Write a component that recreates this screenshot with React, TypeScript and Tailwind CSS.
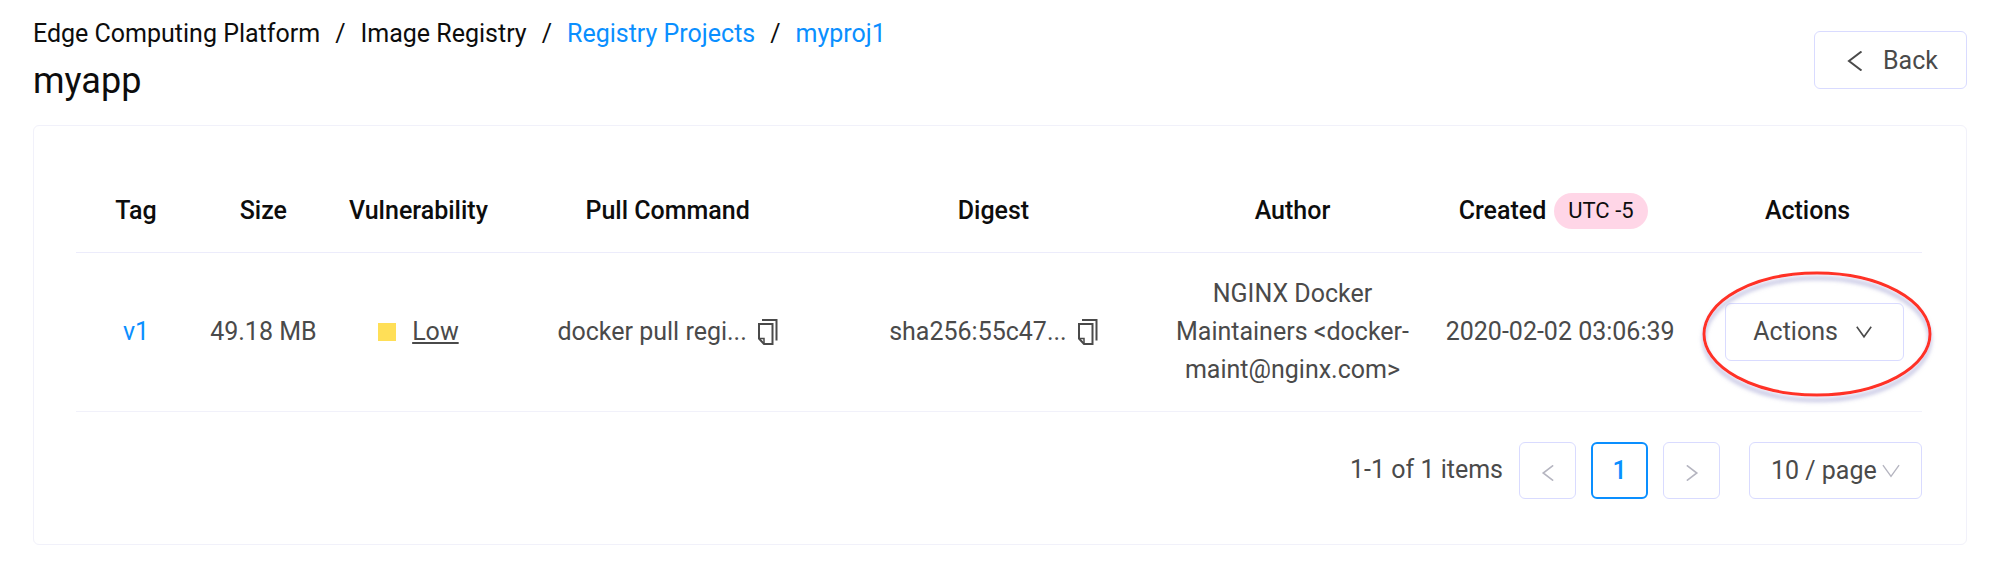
import React from "react";

type ChevronProps = { d: string; className: string; strokeWidth?: number };

function Chevron({ d, className, strokeWidth = 2 }: ChevronProps) {
  return (
    <svg viewBox="0 0 20 20" className={className} fill="none" stroke="currentColor" strokeWidth={strokeWidth} aria-hidden="true">
      <path d={d} />
    </svg>
  );
}

const LEFT = "M16.5 0.5L4 10L16.5 19.5";
const RIGHT = "M3.5 0.5L16 10L3.5 19.5";
const DOWN = "M1 3.5L10 16L19 3.5";

function CopyButton({ label }: { label: string }) {
  return (
    <button type="button" aria-label={label} className="shrink-0">
      <svg viewBox="0 0 20 28" className="h-7 w-5" fill="none" stroke="#4a4a4a" strokeWidth="2" aria-hidden="true">
        <path d="M4 2H18.5V22.5" />
        <path d="M1 6H14.5V26H6L1 20.5Z" />
        <path d="M1 20.5H6V26" strokeWidth="1.5" />
      </svg>
    </button>
  );
}

const columns = [
  { name: "Tag", width: "w-[6.5%]" },
  { name: "Size", width: "w-[7.3%]" },
  { name: "Vulnerability", width: "w-[9.5%]" },
  { name: "Pull Command", width: "w-[17.5%]" },
  { name: "Digest", width: "w-[17.8%]" },
  { name: "Author", width: "w-[14.6%]" },
  { name: "Created", width: "w-[14.4%]" },
  { name: "Actions", width: "w-[12.4%]" },
];

export default function App() {
  return (
    <main className="bg-white px-[33px] pt-[15px] pb-[34px] font-['Roboto',sans-serif] text-[25px] leading-[38px] text-[#4a4a4a]">
      <header className="flex items-start justify-between text-[#0d0d0d]">
        <div>
          <nav aria-label="Breadcrumb">
            <ol className="flex gap-[15px]">
              <li>Edge Computing Platform</li>
              <li aria-hidden="true">/</li>
              <li>Image Registry</li>
              <li aria-hidden="true">/</li>
              <li><a href="#projects" className="text-[#0a8fff]">Registry Projects</a></li>
              <li aria-hidden="true">/</li>
              <li><a href="#myproj1" className="text-[#0a8fff]">myproj1</a></li>
            </ol>
          </nav>
          <h1 className="text-[36px] leading-[56px]">myapp</h1>
        </div>
        <button type="button" className="mt-4 flex h-[58px] w-[153px] items-center justify-center gap-[18px] rounded-md border border-[#d9dbff] pt-px pl-0.5 text-[#4a4a4a]">
          <Chevron d={LEFT} className="size-5" />
          Back
        </button>
      </header>

      <section className="mt-4 rounded-md border border-[#f1f1fa] pt-[42px] pr-11 pb-[45px] pl-[42px]">
        <table className="w-full table-fixed border-separate border-spacing-0 text-center">
          <thead className="text-[#0d0d0d]">
            <tr>
              {columns.map((c) => (
                <th key={c.name} scope="col" className={`${c.width} border-b border-[#ececfb] pt-6 pb-[22px] font-medium whitespace-nowrap`}>
                  {c.name === "Created" ? (
                    <span className="flex items-center justify-center gap-2 pr-[14px]">
                      Created
                      <span className="-my-1 rounded-full bg-[#ffd6e7] px-[14px] text-[22px] leading-9 font-normal">UTC -5</span>
                    </span>
                  ) : (
                    c.name
                  )}
                </th>
              ))}
            </tr>
          </thead>
          <tbody>
            <tr className="*:border-b *:border-[#f1f1fa] *:py-[22px]">
              <td><a href="#v1" className="text-[#0a8fff]">v1</a></td>
              <td className="whitespace-nowrap">49.18 MB</td>
              <td>
                <span className="flex items-center justify-center gap-4">
                  <span className="size-[18px] bg-[#ffdf57]" />
                  <a href="#low" className="underline decoration-2 underline-offset-2">Low</a>
                </span>
              </td>
              <td>
                <span className="flex items-center justify-center gap-[11px] whitespace-nowrap">
                  docker pull regi...
                  <CopyButton label="Copy pull command" />
                </span>
              </td>
              <td>
                <span className="flex items-center justify-center gap-[11px] whitespace-nowrap">
                  sha256:55c47...
                  <CopyButton label="Copy digest" />
                </span>
              </td>
              <td>NGINX Docker<br />Maintainers &lt;docker-<br />maint@nginx.com&gt;</td>
              <td className="whitespace-nowrap">2020-02-02 03:06:39</td>
              <td>
                <div className="relative ml-8 w-[179px]">
                  <button type="button" className="flex h-[58px] w-full items-center justify-center gap-[18px] rounded-md border border-[#d9dbff] pr-1">
                    Actions
                    <Chevron d={DOWN} className="size-4" />
                  </button>
                  <svg viewBox="0 0 240 144" className="pointer-events-none absolute -top-9 -left-7 h-36 w-60 max-w-none" fill="none" aria-hidden="true">
                    <defs>
                      <filter id="ring-shadow" x="-10%" y="-10%" width="120%" height="125%">
                        <feDropShadow dx="0" dy="5" stdDeviation="2" floodColor="#8c8cc8" floodOpacity="0.65" />
                      </filter>
                    </defs>
                    <ellipse cx="120" cy="67" rx="113" ry="61" stroke="#ff3326" strokeWidth="3" filter="url(#ring-shadow)" />
                  </svg>
                </div>
              </td>
            </tr>
          </tbody>
        </table>

        <nav aria-label="Pagination" className="mt-[30px] flex items-center justify-end">
          <span className="mr-4 -mt-0.5">1-1 of 1 items</span>
          <div className="flex gap-[15px]">
            <button type="button" aria-label="Previous page" className="flex h-[57px] w-[57px] items-center justify-center rounded-md border border-[#d9dbff] pt-1 text-[#b5b5c0]">
              <Chevron d={LEFT} className="size-4" />
            </button>
            <button type="button" aria-current="page" className="h-[57px] w-[57px] rounded-md border-2 border-[#0a8fff] font-medium text-[#0a8fff]">1</button>
            <button type="button" aria-label="Next page" className="flex h-[57px] w-[57px] items-center justify-center rounded-md border border-[#d9dbff] pt-1 text-[#b5b5c0]">
              <Chevron d={RIGHT} className="size-4" />
            </button>
          </div>
          <div className="relative ml-[29px] w-[173px]">
            <select aria-label="Items per page" className="block h-[57px] w-full appearance-none rounded-md border border-[#d9dbff] bg-white pl-[21px]">
              <option>10 / page</option>
            </select>
            <Chevron d={DOWN} className="pointer-events-none absolute top-5 right-[22px] size-[18px] text-[#b5b5c0]" strokeWidth={1.5} />
          </div>
        </nav>
      </section>
    </main>
  );
}
